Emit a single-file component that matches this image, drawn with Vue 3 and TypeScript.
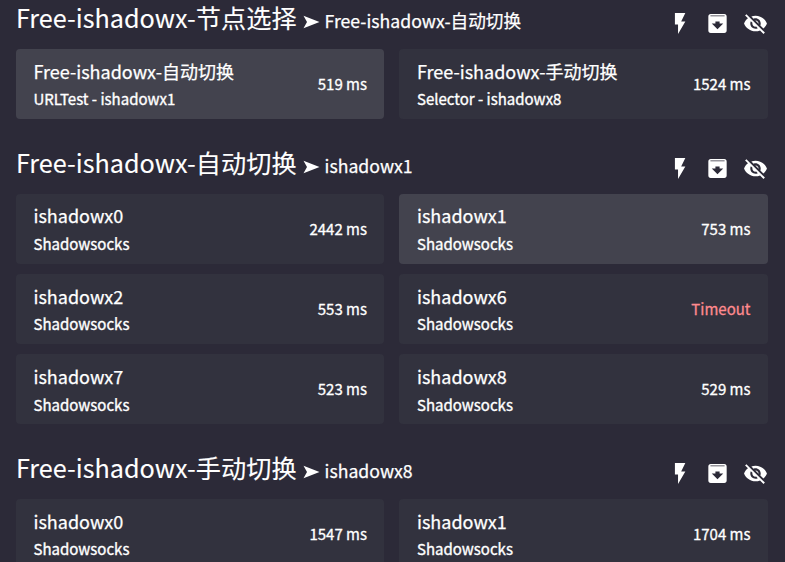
<script setup lang="ts">
interface ProxyNode { name: string; kind: string; delay: string; active?: boolean }
interface Group { name: string; now: string; nodes: ProxyNode[] }

const ss = (name: string, delay: string, active = false): ProxyNode => ({ name, kind: 'Shadowsocks', delay, active })

const groups: Group[] = [
  {
    name: 'Free-ishadowx-节点选择',
    now: 'Free-ishadowx-自动切换',
    nodes: [
      { name: 'Free-ishadowx-自动切换', kind: 'URLTest - ishadowx1', delay: '519 ms', active: true },
      { name: 'Free-ishadowx-手动切换', kind: 'Selector - ishadowx8', delay: '1524 ms' },
    ],
  },
  {
    name: 'Free-ishadowx-自动切换',
    now: 'ishadowx1',
    nodes: [
      ss('ishadowx0', '2442 ms'), ss('ishadowx1', '753 ms', true),
      ss('ishadowx2', '553 ms'), ss('ishadowx6', 'Timeout'),
      ss('ishadowx7', '523 ms'), ss('ishadowx8', '529 ms'),
    ],
  },
  {
    name: 'Free-ishadowx-手动切换',
    now: 'ishadowx8',
    nodes: [ss('ishadowx0', '1547 ms'), ss('ishadowx1', '1704 ms')],
  },
]
</script>

<template>
  <main class="page">
    <section v-for="group in groups" :key="group.name" class="group">
      <header class="head">
        <h2 class="title">{{ group.name }}</h2>
        <svg class="arrow" viewBox="0 0 17 14"><path d="M0.500 0.800 16.500 7 0.500 13.200 4 7Z" /></svg>
        <span class="now">{{ group.now }}</span>
        <div class="actions">
          <svg viewBox="0 0 24 24"><path d="M7.600 2v11h3v9l7-12h-4l4-8z" /></svg>
          <svg viewBox="0 0 24 24"><path fill-rule="evenodd" d="M5.500 2.900h13c1.400 0 2.300 1 2.300 2.300V18.700c0 1.400-.9 2.300-2.300 2.300h-13c-1.400 0-2.300-.9-2.300-2.300V5.200c0-1.300.9-2.300 2.300-2.300zM5.200 4.200v.9h13.600v-.9zM12 17.500L6.500 12H10v-2h4v2h3.500z" /></svg>
          <svg viewBox="0 0 24 24"><path d="M12 7c2.760 0 5 2.240 5 5 0 .65-.13 1.260-.36 1.830l2.920 2.920c1.510-1.260 2.700-2.890 3.430-4.750-1.730-4.390-6-7.500-11-7.500-1.400 0-2.740.25-3.980.7l2.160 2.160C10.740 7.130 11.350 7 12 7zM2 4.270l2.280 2.280.46.46C3.080 8.300 1.780 10.020 1 12c1.730 4.390 6 7.500 11 7.500 1.550 0 3.030-.3 4.380-.84l.42.42L19.730 22 21 20.730 3.270 3 2 4.270zM7.530 9.800l1.550 1.550c-.05.21-.08.43-.08.65 0 1.660 1.340 3 3 3 .22 0 .44-.03.65-.08l1.550 1.550c-.67.33-1.410.53-2.200.53-2.760 0-5-2.240-5-5 0-.79.2-1.530.53-2.200zm4.310-.78l3.150 3.150.02-.16c0-1.660-1.340-3-3-3l-.17.01z" /></svg>
        </div>
      </header>
      <div class="grid">
        <article v-for="node in group.nodes" :key="node.name" class="card" :class="{ active: node.active }">
          <div class="info">
            <span class="name">{{ node.name }}</span>
            <span class="kind">{{ node.kind }}</span>
          </div>
          <span class="delay" :class="{ timeout: node.delay === 'Timeout' }">{{ node.delay }}</span>
        </article>
      </div>
    </section>
  </main>
</template>

<style>
body { background: #2c2a38; }
</style>

<style scoped>
.page {
  box-sizing: border-box;
  height: 562px;
  overflow: hidden;
  padding: 0 17px 0 16px;
  background: #2c2a38;
  color: #fff;
  font-family: "Noto Sans CJK SC", "Noto Sans", sans-serif;
}
.group { height: 145px; }
.group:nth-child(2) { height: 305px; }
.head { display: flex; align-items: center; height: 49px; }
.title { margin: 0; font-size: 25.200px; font-weight: 400; line-height: 34px; padding-bottom: 15px; white-space: nowrap; -webkit-text-stroke: 0.100px #fff; }
.arrow { width: 17px; height: 14px; margin: 0 5px 5px 6px; fill: #fff; }
.now { font-size: 17.650px; line-height: 26px; padding-bottom: 8px; white-space: nowrap; -webkit-text-stroke: 0.250px #fff; }
.actions { display: flex; gap: 13px; margin-left: auto; padding-bottom: 3px; }
.actions svg { width: 25px; height: 25px; fill: #fff; }
.grid { display: grid; grid-template-columns: 368px 369px; column-gap: 15px; row-gap: 10px; }
.card {
  box-sizing: border-box;
  display: flex;
  align-items: center;
  justify-content: space-between;
  height: 70px;
  padding: 0 17.500px 0 17.500px;
  border-radius: 4px;
  background: #32323e;
}
.card:nth-child(odd) { padding-right: 17px; }
.card:nth-child(even) { padding-left: 18px; }
.card.active { background: #43434e; }
.info { display: flex; flex-direction: column; padding-top: 2px; }
.name { font-size: 18px; line-height: 27px; -webkit-text-stroke: 0.250px #fff; }
.kind { font-size: 15px; line-height: 27px; -webkit-text-stroke: 0.350px #fff; }
.group:nth-child(2) .card:nth-child(-n+2) .name { line-height: 25px; }
.group:nth-child(2) .card:nth-child(-n+2) .kind { line-height: 31px; margin-bottom: -2px; }
.group:nth-child(2) .card:nth-child(n+5) .kind { line-height: 29px; margin-bottom: -2px; }
.delay { font-size: 15px; line-height: 24px; padding-bottom: 1px; -webkit-text-stroke: 0.300px currentColor; }
.timeout { color: #ff8a8e; }
</style>
